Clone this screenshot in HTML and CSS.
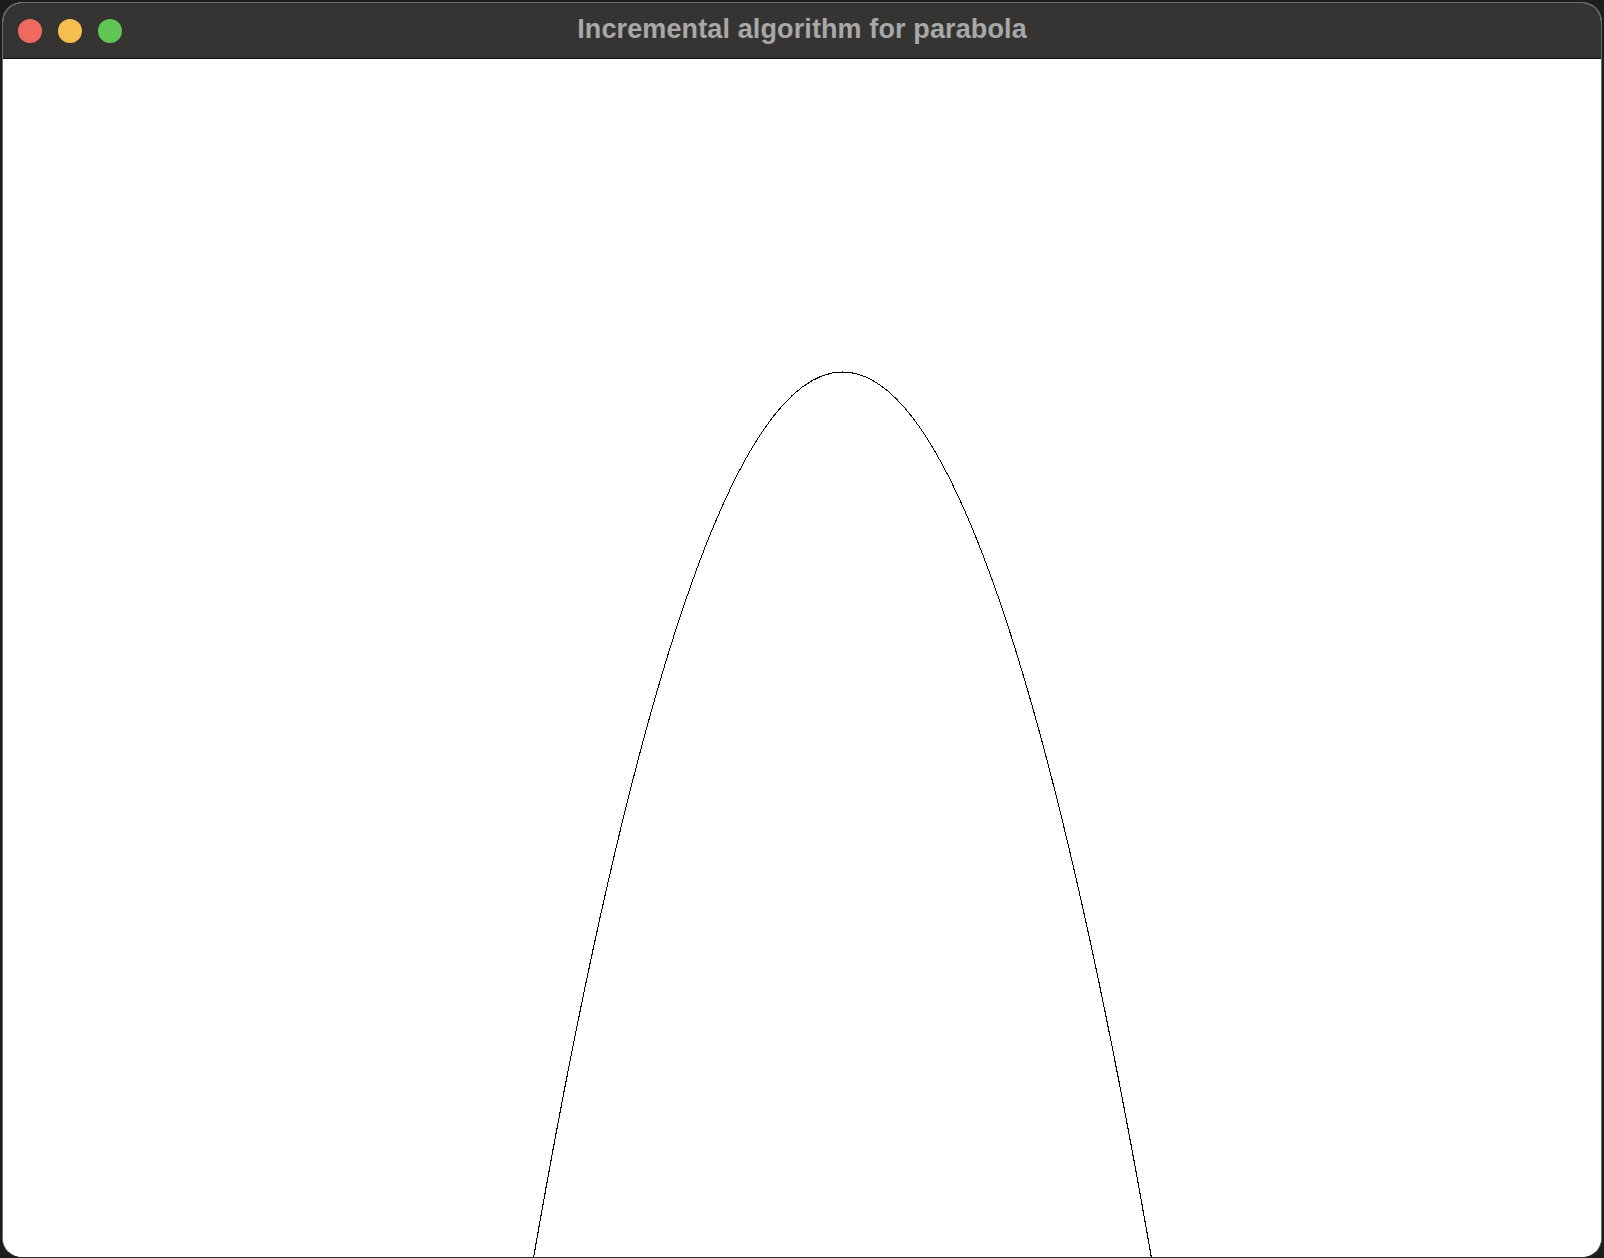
FILE: index.html
```html
<!DOCTYPE html>
<html lang="en">
<head>
<meta charset="utf-8">
<title>Incremental algorithm for parabola</title>
<link rel="stylesheet" href="styles.css">
</head>
<body>
<div class="window">
  <header class="titlebar">
    <div class="lights">
      <span class="light red"></span>
      <span class="light yellow"></span>
      <span class="light green"></span>
    </div>
    <div class="title">Incremental algorithm for parabola</div>
    <div class="spacer"></div>
  </header>
  <main class="canvas">
    <svg class="plot" width="1598" height="1198" viewBox="0 0 1598 1198" xmlns="http://www.w3.org/2000/svg">
      <path d="M519.5 1263.3 Q839.5 -637.3 1159.5 1263.3" fill="none" stroke="#000" stroke-width="1.1" shape-rendering="crispEdges"/>
    </svg>
  </main>
</div>
</body>
</html>
```

FILE: styles.css
```css
html, body {
  margin: 0;
  padding: 0;
  background: #1d1d1d;
  width: 1604px;
  height: 1258px;
  overflow: hidden;
}
body {
  padding: 2px 2px 0 2px;
  box-sizing: border-box;
}
.window {
  width: 1600px;
  height: 1256px;
  box-sizing: border-box;
  border: 1px solid #6b6b6b;
  border-bottom-color: #2a2a2a;
  border-radius: 20px 20px 20px 20px;
  overflow: hidden;
  display: flex;
  flex-direction: column;
  background: #fff;
}
.titlebar {
  height: 55px;
  flex: 0 0 55px;
  background: #363432;
  border-bottom: 1px solid #111;
  display: grid;
  grid-template-columns: 1fr auto 1fr;
  align-items: center;
}
.lights {
  display: flex;
  gap: 16px;
  padding-left: 15px;
}
.light {
  width: 24px;
  height: 24px;
  border-radius: 50%;
  display: block;
}
.red { background: #ee6a5e; }
.yellow { background: #f5be4f; }
.green { background: #61c554; }
.title {
  font-family: "Liberation Sans", Arial, sans-serif;
  font-weight: 700;
  font-size: 27px;
  letter-spacing: 0.12px;
  color: #a8a8a8;
  line-height: 1;
  padding-bottom: 2px;
}
.canvas {
  flex: 1;
  background: #fff;
  overflow: hidden;
}
.plot {
  display: block;
}
```
